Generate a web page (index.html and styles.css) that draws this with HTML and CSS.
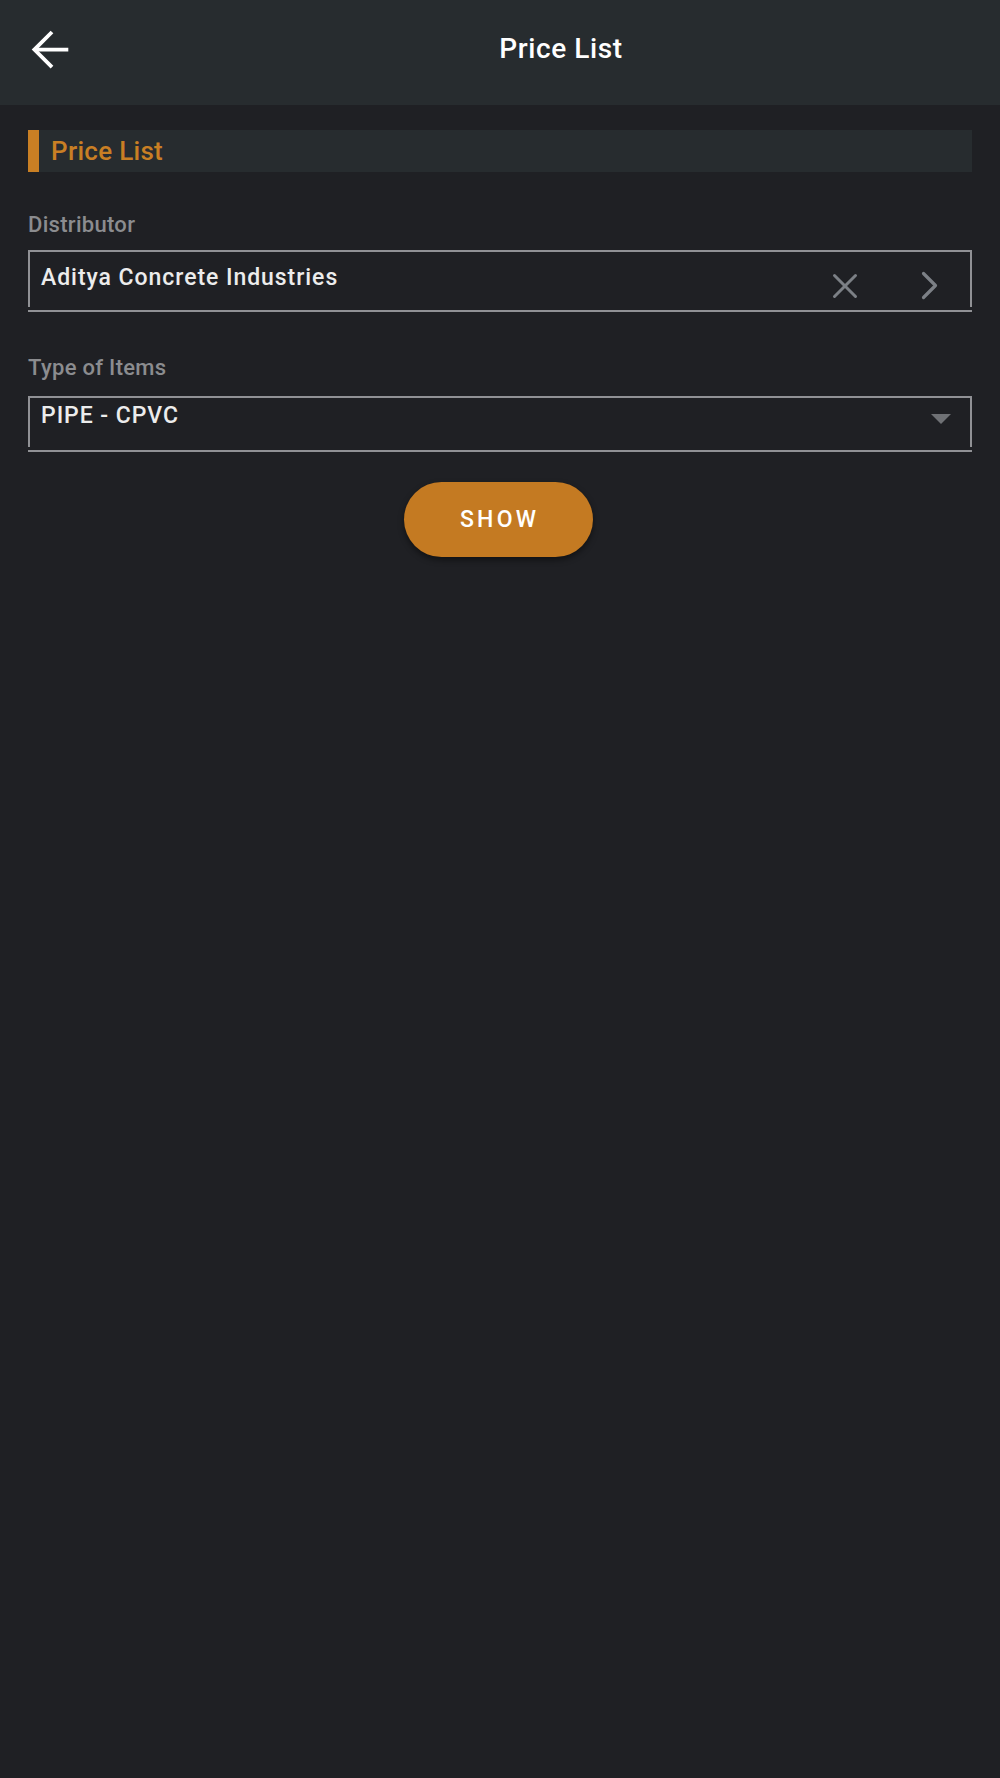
FILE: index.html
```html
<!DOCTYPE html>
<html>
<head>
<meta charset="utf-8">
<title>Price List</title>
<link rel="stylesheet" href="styles.css">
</head>
<body>
<header class="topbar">
  <div class="topbar-back">
    <svg class="icon-back" width="40" height="40" viewBox="0 0 40 40">
      <polyline points="22,2 4.4,19.6 22,37.2" fill="none" stroke="#ffffff" stroke-width="3.8" stroke-linejoin="miter"/>
      <line x1="5" y1="19.6" x2="38.3" y2="19.6" stroke="#ffffff" stroke-width="3.8"/>
    </svg>
  </div>
  <div class="topbar-title">Price List</div>
</header>

<main class="content">
  <div class="section-head">
    <span class="section-mark"></span>
    <span class="section-text">Price List</span>
  </div>

  <div class="field-label field-label--first">Distributor</div>
  <div class="field-box field-box--select">
    <div class="field-value field-value--select">Aditya Concrete Industries</div>
    <div class="field-icons">
      <svg class="icon-clear" width="26" height="26" viewBox="0 0 26 26">
        <line x1="2.5" y1="2.5" x2="23.5" y2="23.5" stroke="#7c8086" stroke-width="3" stroke-linecap="round"/>
        <line x1="23.5" y1="2.5" x2="2.5" y2="23.5" stroke="#7c8086" stroke-width="3" stroke-linecap="round"/>
      </svg>
      <svg class="icon-next" width="18" height="30" viewBox="0 0 18 30">
        <polyline points="2.5,2.5 14.5,14.5 2.5,26.5" fill="none" stroke="#7c8086" stroke-width="3.2" stroke-linecap="round" stroke-linejoin="round"/>
      </svg>
    </div>
  </div>
  <div class="field-underline"></div>

  <div class="field-label field-label--second">Type of Items</div>
  <div class="field-box field-box--picker">
    <div class="field-value field-value--picker">PIPE - CPVC</div>
    <span class="picker-caret"></span>
  </div>
  <div class="field-underline"></div>

  <div class="actions">
    <button class="btn-show">SHOW</button>
  </div>
</main>
</body>
</html>
```

FILE: styles.css
```css
* {
  box-sizing: border-box;
}

html, body {
  margin: 0;
  padding: 0;
}

body {
  background: #1f2024;
  min-height: 1778px;
  font-family: Roboto, "Noto Sans", "Liberation Sans", sans-serif;
  color: #ececec;
}

.topbar {
  height: 105px;
  background: #272c2f;
  display: flex;
  align-items: flex-start;
}

.topbar-back {
  width: 122px;
  flex: 0 0 122px;
  padding-left: 30px;
  padding-top: 30px;
}

.icon-back {
  display: block;
}

.topbar-title {
  flex: 1;
  text-align: center;
  padding-top: 33px;
  font-size: 28px;
  line-height: 32px;
  font-weight: 500;
  letter-spacing: 0.6px;
  color: #ffffff;
}

.content {
  padding: 25px 28px 0 28px;
}

.section-head {
  height: 42px;
  background: #272c2f;
  display: flex;
  align-items: stretch;
}

.section-mark {
  width: 11px;
  background: #c97f24;
}

.section-text {
  padding-left: 12px;
  padding-top: 6px;
  font-size: 26px;
  line-height: 30px;
  font-weight: 500;
  letter-spacing: 0.3px;
  color: #c97f24;
}

.field-label {
  font-size: 22px;
  line-height: 24px;
  font-weight: 500;
  letter-spacing: 0.3px;
  color: #8b8c8f;
}

.field-label--first {
  margin-top: 41px;
  margin-bottom: 13px;
}

.field-label--second {
  margin-top: 44px;
  margin-bottom: 16px;
}

.field-box {
  border: 2px solid #909195;
  border-bottom: none;
  display: flex;
  align-items: flex-start;
}

.field-box--select {
  height: 57px;
}

.field-box--picker {
  height: 51px;
}

.field-value {
  flex: 1;
  padding-left: 11px;
  font-size: 23px;
  line-height: 26px;
  font-weight: 500;
  letter-spacing: 0.95px;
  color: #ececec;
}

.field-value--select {
  padding-top: 13px;
}

.field-value--picker {
  padding-top: 5px;
}

.field-icons {
  display: flex;
  align-items: center;
  margin-top: 19px;
  padding-right: 31px;
}

.icon-clear {
  display: block;
  margin-right: 63px;
}

.icon-next {
  display: block;
}

.picker-caret {
  width: 0;
  height: 0;
  margin-top: 16px;
  margin-right: 19px;
  border-left: 10px solid transparent;
  border-right: 10px solid transparent;
  border-top: 10px solid #6f7175;
}

.field-underline {
  height: 2px;
  margin-top: 3px;
  background: #909195;
}

.actions {
  display: flex;
  justify-content: center;
  margin-top: 30px;
  padding-right: 4px;
}

.btn-show {
  width: 189px;
  height: 75px;
  border: none;
  border-radius: 38px;
  background: #c47a22;
  color: #ffffff;
  font-family: Roboto, "Noto Sans", "Liberation Sans", sans-serif;
  font-size: 23px;
  font-weight: 500;
  letter-spacing: 3.3px;
  padding: 0 0 0 3.3px;
  box-shadow: 0 3px 6px rgba(0, 0, 0, 0.45);
  cursor: pointer;
}
```
